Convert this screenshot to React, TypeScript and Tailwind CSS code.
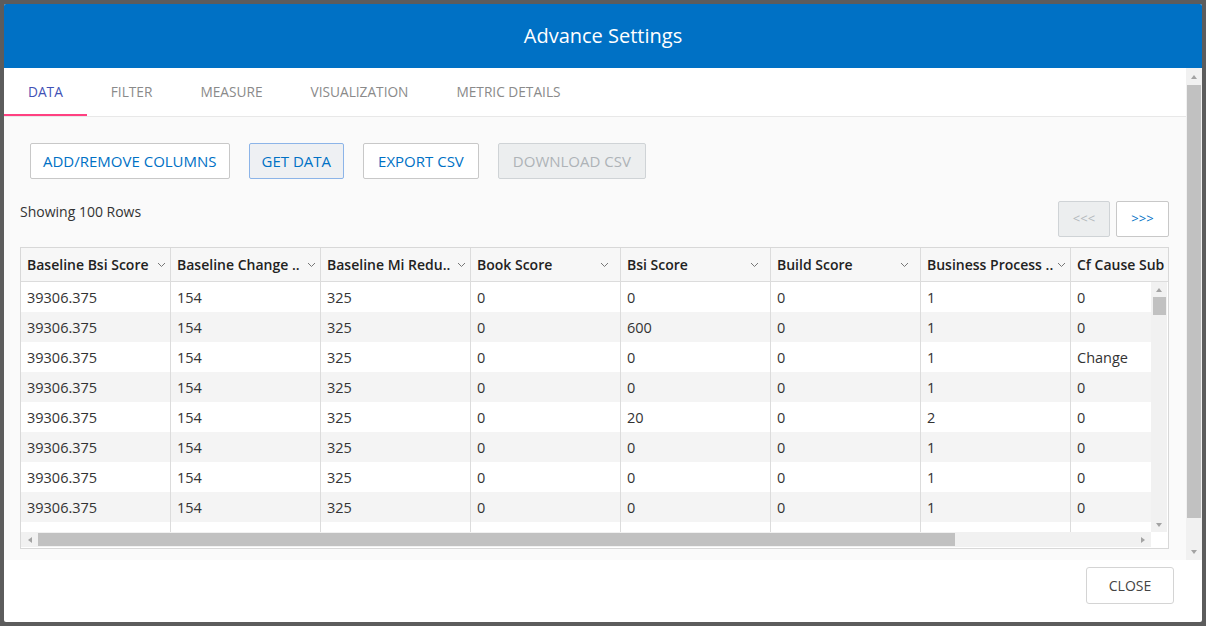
import React from 'react'

const columns = [
  { label: 'Baseline Bsi Score', short: 'Baseline Bsi Score', tight: true },
  { label: 'Baseline Change Score', short: 'Baseline Change ..', tight: true },
  { label: 'Baseline Mi Reduction', short: 'Baseline Mi Redu..', tight: true },
  { label: 'Book Score', short: 'Book Score', tight: false },
  { label: 'Bsi Score', short: 'Bsi Score', tight: false },
  { label: 'Build Score', short: 'Build Score', tight: false },
  { label: 'Business Process Score', short: 'Business Process ..', tight: true },
  { label: 'Cf Cause Sub', short: 'Cf Cause Sub', tight: false, last: true },
]

const rows = [
  ['39306.375', '154', '325', '0', '0', '0', '1', '0'],
  ['39306.375', '154', '325', '0', '600', '0', '1', '0'],
  ['39306.375', '154', '325', '0', '0', '0', '1', 'Change'],
  ['39306.375', '154', '325', '0', '0', '0', '1', '0'],
  ['39306.375', '154', '325', '0', '20', '0', '2', '0'],
  ['39306.375', '154', '325', '0', '0', '0', '1', '0'],
  ['39306.375', '154', '325', '0', '0', '0', '1', '0'],
  ['39306.375', '154', '325', '0', '0', '0', '1', '0'],
  ['', '', '', '', '', '', '', ''],
]

const tabs = ['DATA', 'FILTER', 'MEASURE', 'VISUALIZATION', 'METRIC DETAILS']

function Arrow({ dir }: { dir: 'up' | 'down' | 'left' | 'right' }) {
  const pts = {
    up: '1,6 4,2 7,6',
    down: '1,2 4,6 7,2',
    left: '6,1 2,4 6,7',
    right: '2,1 6,4 2,7',
  }[dir]
  return (
    <svg width="8" height="8" viewBox="0 0 8 8">
      <polygon points={pts} fill="#a3a3a3" />
    </svg>
  )
}

function Chevron() {
  return (
    <svg width="9" height="6" viewBox="0 0 9 6" className="shrink-0">
      <path d="M1 1l3.5 3.5L8 1" stroke="#777" strokeWidth="1" fill="none" />
    </svg>
  )
}

function Btn({ children, variant, px }: { children: React.ReactNode; variant?: 'active' | 'disabled'; px?: string }) {
  const cls =
    variant === 'active'
      ? 'bg-[#eef0f3] border-[#8cb4e8] text-[#0071c5]'
      : variant === 'disabled'
        ? 'bg-[#eceeef] border-[#cfd3d6] text-[#aeb3b7]'
        : 'bg-white border-[#c8c8c8] text-[#0071c5]'
  return (
    <button className={`h-[36px] ${px ?? 'px-[12px]'} border rounded-[2px] text-[15px] ${cls}`}>{children}</button>
  )
}

export default function App() {
  return (
    <div className="w-[1206px] h-[626px] bg-[#5c5c5c] p-[4px]" style={{ fontFamily: '"Open Sans", "Noto Sans", sans-serif' }}>
      <div className="w-[1198px] h-[618px] bg-white flex flex-col rounded-[2px] overflow-hidden">
        <div className="h-[64px] shrink-0 bg-[#0071c5] text-white text-[20px] flex items-center justify-center">
          Advance Settings
        </div>

        <div className="flex h-[492px] shrink-0">
          <div className="flex-1 min-w-0 flex flex-col">
            <div className="h-[49px] shrink-0 flex border-b border-[#e8e8e8] bg-white">
              {tabs.map((t, i) => (
                <div
                  key={t}
                  className={`px-[24px] flex items-center text-[13.7px] relative ${i === 0 ? 'text-[#3f51b5]' : 'text-[#8a8a8a]'}`}
                >
                  {t}
                  {i === 0 && <div className="absolute left-0 right-0 bottom-0 h-[2px] bg-[#ff4081]" />}
                </div>
              ))}
            </div>

            <div className="flex-1 min-w-0 bg-[#fafafa] pl-[16px] pr-[17px] pt-[26px] flex flex-col">
              <div className="flex gap-[19px] ml-[10px]">
                <Btn>ADD/REMOVE COLUMNS</Btn>
                <Btn variant="active">GET DATA</Btn>
                <Btn px="px-[14px]">EXPORT CSV</Btn>
                <Btn variant="disabled" px="px-[14px]">DOWNLOAD CSV</Btn>
              </div>

              <div className="flex justify-between items-start mt-[22px]">
                <div className="text-[14px] text-[#333]">Showing 100 Rows</div>
                <div className="flex gap-[6px]">
                  <button className="w-[52px] h-[36px] border border-[#cfd3d6] bg-[#eceeef] text-[#b3b8bc] text-[13px] rounded-[2px]">&lt;&lt;&lt;</button>
                  <button className="w-[53px] h-[36px] border border-[#c8c8c8] bg-white text-[#0071c5] text-[13px] rounded-[2px]">&gt;&gt;&gt;</button>
                </div>
              </div>

              <div className="mt-[10px] h-[302px] min-w-0 border border-[#d8d8d8] bg-white flex flex-col overflow-hidden">
                <div className="h-[34px] shrink-0 flex bg-[#f7f7f7] border-b border-[#dcdcdc] overflow-hidden">
                  {columns.map((c) => (
                    <div
                      key={c.label}
                      className={`w-[150px] shrink-0 h-full flex items-center pl-[6px] ${c.last ? '' : 'border-r border-[#dcdcdc]'} ${c.tight ? 'pr-[4px]' : 'pr-[11px]'}`}
                    >
                      <span className={`text-[14px] font-semibold text-[#222] whitespace-nowrap ${c.last ? '' : 'flex-1 min-w-0 overflow-hidden'}`}>
                        {c.short}
                      </span>
                      {!c.last && <Chevron />}
                    </div>
                  ))}
                </div>

                <div className="flex h-[250px] shrink-0 min-w-0">
                  <div className="flex-1 min-w-0 overflow-hidden">
                    {rows.map((r, ri) => (
                      <div key={ri} className={`h-[30px] flex ${ri % 2 === 1 ? 'bg-[#f4f4f4]' : 'bg-white'}`}>
                        {r.map((v, ci) => (
                          <div
                            key={ci}
                            className={`w-[150px] shrink-0 h-full flex items-center px-[6px] pt-[1px] text-[14.5px] text-[#333] ${ci < 7 ? 'border-r border-[#dcdcdc]' : ''}`}
                          >
                            {v}
                          </div>
                        ))}
                      </div>
                    ))}
                  </div>
                  <div className="w-[16px] shrink-0 bg-[#f1f1f1] flex flex-col items-center">
                    <div className="h-[15px] flex items-center justify-center"><Arrow dir="up" /></div>
                    <div className="w-[13px] h-[18px] bg-[#c1c1c1]" />
                    <div className="flex-1" />
                    <div className="h-[15px] flex items-center justify-center"><Arrow dir="down" /></div>
                  </div>
                  <div className="w-[1px] shrink-0 bg-white" />
                </div>

                <div className="flex h-[15px] shrink-0 min-w-0">
                  <div className="flex-1 min-w-0 bg-[#f1f1f1] flex items-center">
                    <div className="w-[17px] flex justify-center"><Arrow dir="left" /></div>
                    <div className="w-[917px] h-[13px] bg-[#c1c1c1]" />
                    <div className="flex-1" />
                    <div className="w-[17px] flex justify-center"><Arrow dir="right" /></div>
                  </div>
                  <div className="w-[17px] shrink-0 bg-white" />
                </div>
              </div>
            </div>
          </div>

          <div className="w-[16px] shrink-0 bg-[#f1f1f1] flex flex-col items-center">
            <div className="h-[17px] flex items-center justify-center"><Arrow dir="up" /></div>
            <div className="w-[14px] h-[433px] bg-[#c1c1c1]" />
            <div className="flex-1" />
            <div className="h-[17px] flex items-center justify-center"><Arrow dir="down" /></div>
          </div>
        </div>

        <div className="flex-1 flex items-start justify-end pt-[7px] pr-[28px]">
          <button className="w-[88px] h-[37px] border border-[#d4d4d4] rounded-[3px] bg-white text-[14px] text-[#444]">CLOSE</button>
        </div>
      </div>
    </div>
  )
}
